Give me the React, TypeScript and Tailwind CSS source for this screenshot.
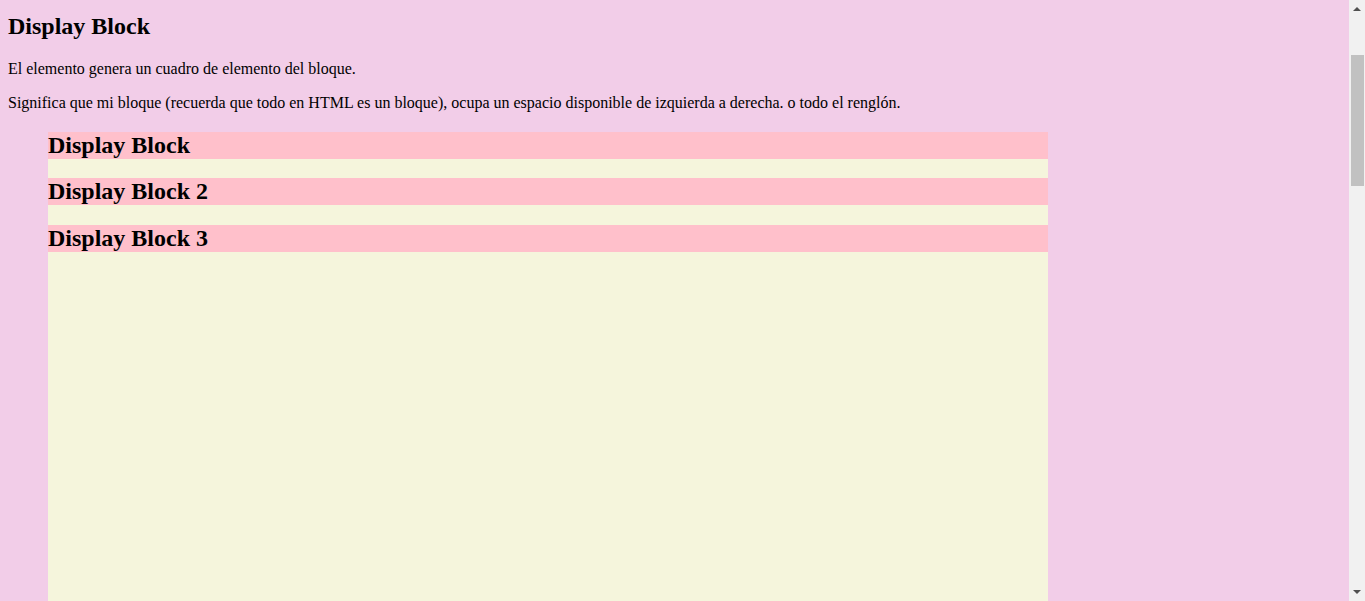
import React from 'react';

const blocks = ['Display Block', 'Display Block 2', 'Display Block 3'];

const Scrollbar: React.FC = () => (
  <div className="w-[16px] shrink-0 h-full bg-[#f1f1f1] flex flex-col">
    <div className="h-[17px] flex items-center justify-center">
      <svg width="8" height="5" viewBox="0 0 8 5">
        <polygon points="0,5 4,1 8,5" fill="#505050" />
      </svg>
    </div>
    <div className="flex-1 pl-[2px] pr-[1px]">
      <div className="mt-[38px] h-[131px] bg-[#c1c1c1]" />
    </div>
    <div className="h-[17px] flex items-center justify-center">
      <svg width="8" height="5" viewBox="0 0 8 5">
        <polygon points="0,0 8,0 4,4" fill="#505050" />
      </svg>
    </div>
  </div>
);

const App: React.FC = () => {
  return (
    <div className="h-screen flex overflow-hidden bg-[#f2cde8] text-black font-['Liberation_Serif','Times_New_Roman',serif]">
      <div className="flex-1 min-w-0 px-2 pt-[13px]">
        <h2 className="text-[24px] font-bold leading-[26.6px] mb-[20px]">Display Block</h2>
        <p className="text-[16px] leading-[18px] mb-4">El elemento genera un cuadro de elemento del bloque.</p>
        <p className="text-[16px] leading-[18px] mb-[20px] whitespace-nowrap">
          Significa que mi bloque (recuerda que todo en HTML es un bloque), ocupa un espacio disponible de izquierda a derecha. o todo el renglón.
        </p>

        {/* contenedor beige con los bloques */}
        <div className="ml-10 w-[1000px] h-[2200px] bg-[#f5f5dc]">
          {blocks.map((title) => (
            <h2 key={title} className="text-[24px] font-bold leading-[27px] mb-[19.5px] bg-[#ffc0cb]">
              {title}
            </h2>
          ))}
        </div>
      </div>
      <Scrollbar />
    </div>
  );
};

export default App;
